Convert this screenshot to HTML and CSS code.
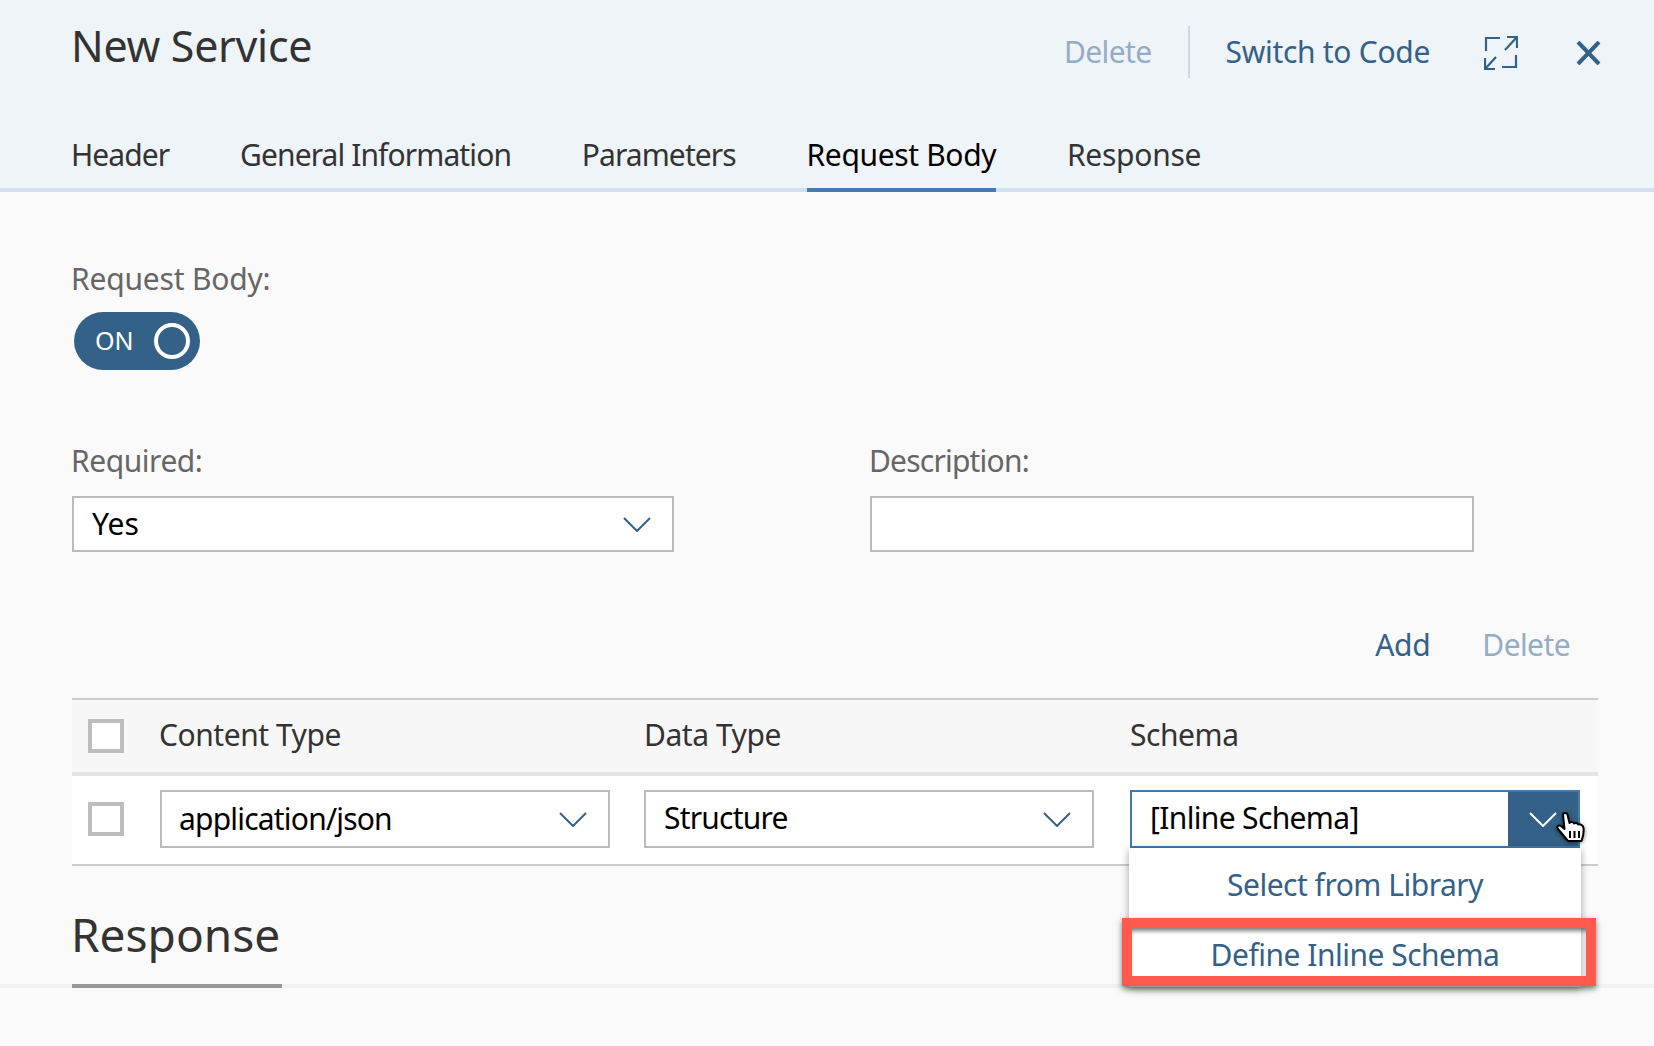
FILE: index.html
```html
<!DOCTYPE html>
<html lang="en">
<head>
<meta charset="utf-8">
<title>New Service</title>
<link rel="stylesheet" href="styles.css">
</head>
<body>
<div class="header">
	<div class="title-row">
		<div class="title">New Service</div>
		<div class="actions">
			<span class="link disabled">Delete</span>
			<span class="divider"></span>
			<span class="link">Switch to Code</span>
			<svg class="expand" width="34" height="35" viewBox="0 0 34 35"><path d="M2 16V3H16M23 2H33V13M33 2L21 15M1 23V34H11M1 34L12 22M18 32H32V20" fill="none" stroke="#346187" stroke-width="2.200"/></svg>
			<svg class="close" width="25" height="24" viewBox="0 0 25 24"><path d="M2 1L23 23M23 1L2 23" fill="none" stroke="#346187" stroke-width="4"/></svg>
		</div>
	</div>
	<div class="tabs">
		<span class="tab">Header</span>
		<span class="tab">General Information</span>
		<span class="tab">Parameters</span>
		<span class="tab active">Request Body</span>
		<span class="tab loose">Response</span>
	</div>
</div>

<div class="content">
	<div class="label loose">Request Body:</div>
	<div class="toggle"><span>ON</span><i class="knob"></i></div>

	<div class="fields">
		<div class="field field-left">
			<div class="label">Required:</div>
			<div class="select">
				<span>Yes</span>
				<svg class="chevron" width="28" height="15" viewBox="0 0 28 15"><path d="M1 1L14 14L27 1" fill="none" stroke="#346187" stroke-width="2"/></svg>
			</div>
		</div>
		<div class="field field-right">
			<div class="label tight">Description:</div>
			<div class="select"></div>
		</div>
	</div>

	<div class="table-actions">
		<span class="link">Add</span>
		<span class="link disabled">Delete</span>
	</div>
</div>

<div class="table">
	<div class="table-row table-head">
		<div class="check"></div>
		<div class="head-text first">Content Type</div>
		<div class="head-text">Data Type</div>
		<div class="head-text">Schema</div>
	</div>
	<div class="table-row table-body">
		<div class="check"></div>
		<div class="select cell-select first">
			<span>application/json</span>
			<svg class="chevron" width="28" height="15" viewBox="0 0 28 15"><path d="M1 1L14 14L27 1" fill="none" stroke="#346187" stroke-width="2"/></svg>
		</div>
		<div class="select cell-select raised">
			<span>Structure</span>
			<svg class="chevron" width="28" height="15" viewBox="0 0 28 15"><path d="M1 1L14 14L27 1" fill="none" stroke="#346187" stroke-width="2"/></svg>
		</div>
		<div class="select cell-select raised schema-select">
			<span>[Inline Schema]</span>
			<div class="schema-button">
				<svg width="28" height="15" viewBox="0 0 28 15"><path d="M1 1L14 14L27 1" fill="none" stroke="#fff" stroke-width="2"/></svg>
			</div>
			<div class="popover">
				<div class="popover-item">Select from Library</div>
				<div class="popover-item">Define Inline Schema</div>
				<div class="highlight"></div>
			</div>
			<svg class="hand" width="29" height="31" viewBox="0 0 29 31"><path d="M7 2.500C7 .5 11 .5 11.500 2.500L13.500 11C15 9.500 17.500 10 18 11.500C19.500 10.500 21.500 11 22 12.500C24 12 27 13 27.500 16C28 20 27 25 25.500 29H12L2 17C0 14.500 3 12.500 5 14L8.500 17Z" fill="#fff" stroke="#000" stroke-width="2" stroke-linejoin="round"/><path d="M14 19V26M18.500 19V26M23 19V26" fill="none" stroke="#000" stroke-width="2"/></svg>
		</div>
	</div>
</div>

<div class="section">
	<span class="section-title">Response</span>
</div>
</body>
</html>
```

FILE: styles.css
```css
body {
	margin: 0;
	height: 1046px;
	overflow: hidden;
	background: #fafafa;
	font-family: "Noto Sans", sans-serif;
	font-size: 30px;
	color: #333;
}

.header {
	box-sizing: border-box;
	height: 192px;
	padding: 26px 0 0 72px;
	background: #eff4f9;
	border-bottom: 4px solid #d1dff0;
}

.title-row {
	display: flex;
	justify-content: space-between;
	height: 52px;
}

.title {
	margin: -1px 0 0 -1px;
	font-size: 43px;
	line-height: 42px;
	letter-spacing: -0.3px;
}

.actions {
	display: flex;
	align-items: center;
	height: 52px;
}

.link {
	color: #346187;
	line-height: 36px;
	letter-spacing: -0.3px;
}

.link.disabled {
	color: #94adc5;
	letter-spacing: -0.6px;
}

.divider {
	width: 2px;
	height: 52px;
	margin: 0 36px;
	background: #d0d8df;
}

.expand {
	margin-left: 54px;
}

.close {
	margin: 2px 53px 0 58px;
}

.tabs {
	display: flex;
	gap: 70.7px;
	margin: 32px 0 0 -1px;
}

.tab {
	height: 56px;
	padding-top: 22px;
	line-height: 46px;
	letter-spacing: -0.9px;
	border-bottom: 4px solid transparent;
}

.tab.active {
	color: #000;
	letter-spacing: -0.35px;
	border-bottom-color: #427cac;
}

.tab.loose {
	letter-spacing: -0.25px;
}

.content {
	padding: 70px 0 0 72px;
}

.label {
	margin-left: -1px;
	padding-bottom: 2px;
	color: #666;
	line-height: 34px;
	letter-spacing: -0.45px;
}

.label.loose {
	letter-spacing: -0.2px;
}

.label.tight {
	letter-spacing: -0.8px;
}

.toggle {
	display: flex;
	align-items: center;
	justify-content: space-between;
	box-sizing: border-box;
	width: 126px;
	height: 58px;
	margin: 14px 0 0 2px;
	padding: 0 10px 0 21px;
	border-radius: 29px;
	background: #346187;
	color: #fff;
	font-size: 25px;
}

.toggle span {
	margin-top: -2px;
}

.knob {
	box-sizing: border-box;
	width: 36px;
	height: 36px;
	border: 4px solid #fff;
	border-radius: 50%;
}

.fields {
	display: flex;
	gap: 196px;
	margin-top: 74px;
}

.field-left {
	width: 602px;
}

.field-right {
	width: 604px;
}

.select {
	display: flex;
	align-items: center;
	justify-content: space-between;
	box-sizing: border-box;
	height: 56px;
	margin-top: 16px;
	padding: 0 21px 0 18px;
	background: #fff;
	border: 2px solid #bbb;
	color: #000;
}

.select span {
	margin-top: -2px;
}

.chevron {
	margin-top: 1px;
}

.table-actions {
	display: flex;
	justify-content: flex-end;
	gap: 52px;
	margin-top: 75px;
	padding-right: 84px;
}

.table {
	margin: 35px 56px 0 72px;
	border-top: 2px solid #ccc;
}

.table-row {
	display: grid;
	grid-template-columns: 88px 484px 486px 1fr;
	align-items: center;
	box-sizing: border-box;
}

.table-head {
	height: 76px;
	background: #f7f7f7;
	border-bottom: 4px solid #e5e5e5;
}

.head-text {
	margin-top: -3px;
	letter-spacing: -0.45px;
}

.head-text.first {
	margin-left: -1px;
}

.table-body {
	height: 90px;
	padding-bottom: 2px;
	background: #fff;
	border-bottom: 2px solid #ccc;
}

.check {
	box-sizing: border-box;
	width: 36px;
	height: 34px;
	margin-left: 16px;
	background: #fff;
	border: 4px solid #bdbdbd;
}

.cell-select {
	height: 58px;
	margin-top: 0;
	width: 450px;
	letter-spacing: -0.8px;
}

.cell-select.first {
	padding-left: 17px;
}

.cell-select span {
	margin-top: -1px;
}

.cell-select.raised span {
	margin-top: -3px;
}

.schema-select {
	position: relative;
	padding-right: 0;
	border-color: #427cac;
	letter-spacing: -0.65px;
}

.schema-button {
	position: absolute;
	top: 0;
	right: 0;
	bottom: 0;
	display: flex;
	align-items: center;
	justify-content: center;
	width: 70px;
	background: #346187;
}

.popover {
	position: absolute;
	top: 56px;
	left: -3px;
	right: -3px;
	height: 139px;
	background: #fff;
	box-shadow: 0 2px 8px rgba(0, 0, 0, .35);
	color: #346187;
	letter-spacing: -0.5px;
	text-align: center;
}

.popover-item {
	height: 70px;
	line-height: 74px;
}

.highlight {
	position: absolute;
	top: 70px;
	left: -7px;
	box-sizing: border-box;
	width: 474px;
	height: 68px;
	border: 10px solid #ff5a4d;
	box-shadow: 0 3px 6px rgba(0, 0, 0, .5), inset 0 5px 4px -2px rgba(0, 0, 0, .5);
}

.hand {
	position: absolute;
	top: 20px;
	right: -7px;
	filter: drop-shadow(0 1px 2px rgba(0, 0, 0, .5));
}

.section {
	height: 118px;
	padding-left: 72px;
	border-bottom: 4px solid #f2f2f2;
}

.section-title {
	display: inline-block;
	box-sizing: border-box;
	width: 210px;
	height: 122px;
	padding-top: 37px;
	border-bottom: 4px solid #999;
	font-size: 46px;
	line-height: 62px;
	text-indent: -1px;
}
```
